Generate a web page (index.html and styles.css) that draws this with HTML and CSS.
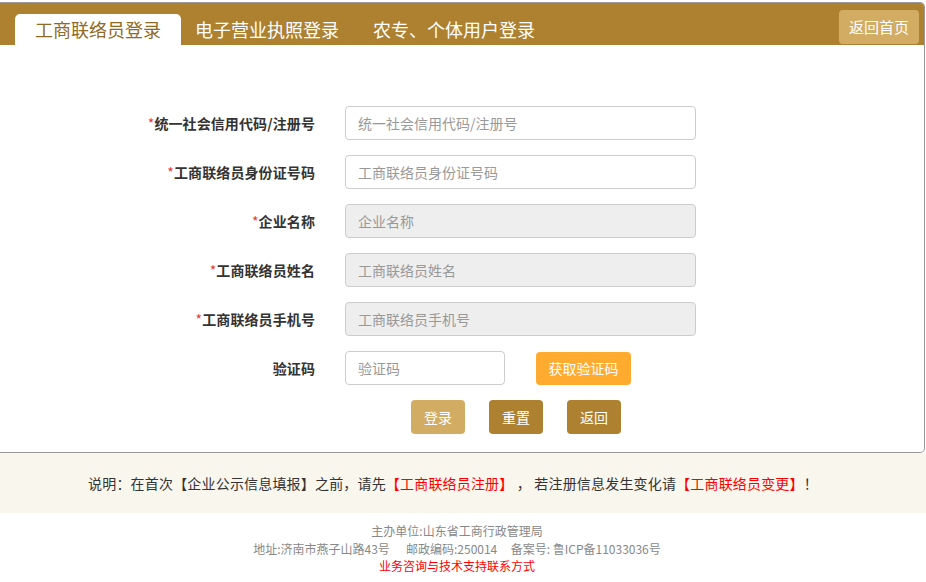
FILE: index.html
```html
<!DOCTYPE html>
<html lang="zh-CN">
<head>
  <meta charset="UTF-8" />
  <meta name="viewport" content="width=device-width, initial-scale=1" />
  <title>工商联络员登录</title>
  <link rel="stylesheet" href="styles.css">
</head>
<body>

  <div class="panel">
    <div class="panel-head">
      <div class="tabs">
        <a href="#" class="tab active">工商联络员登录</a>
        <a href="#" class="tab">电子营业执照登录</a>
        <a href="#" class="tab tab-last">农专、个体用户登录</a>
      </div>
      <a href="#" class="home-btn">返回首页</a>
    </div>

    <form class="login-form">
      <label class="form-label"><span class="req">*</span>统一社会信用代码/注册号</label>
      <input class="form-input" type="text" placeholder="统一社会信用代码/注册号">

      <label class="form-label"><span class="req">*</span>工商联络员身份证号码</label>
      <input class="form-input" type="text" placeholder="工商联络员身份证号码">

      <label class="form-label"><span class="req">*</span>企业名称</label>
      <input class="form-input" type="text" placeholder="企业名称" disabled>

      <label class="form-label"><span class="req">*</span>工商联络员姓名</label>
      <input class="form-input" type="text" placeholder="工商联络员姓名" disabled>

      <label class="form-label"><span class="req">*</span>工商联络员手机号</label>
      <input class="form-input" type="text" placeholder="工商联络员手机号" disabled>

      <label class="form-label">验证码</label>
      <div class="code-row">
        <input class="form-input code-input" type="text" placeholder="验证码">
        <button type="button" class="btn btn-orange">获取验证码</button>
      </div>

      <div class="actions">
        <button type="button" class="btn btn-light">登录</button>
        <button type="reset" class="btn btn-gold">重置</button>
        <button type="button" class="btn btn-gold">返回</button>
      </div>
    </form>
  </div>

  <div class="notice">
    说明：在首次【企业公示信息填报】之前，请先<a href="#" class="red">【工商联络员注册】</a> ，
    若注册信息发生变化请<a href="#" class="red">【工商联络员变更】</a>！
  </div>

  <div class="footer">
    <p>主办单位:山东省工商行政管理局</p>
    <p>地址:济南市燕子山路43号&nbsp;&nbsp;&nbsp;&nbsp;&nbsp;&nbsp;邮政编码:250014&nbsp;&nbsp;&nbsp;&nbsp;&nbsp;备案号: 鲁ICP备11033036号</p>
    <p><a href="#" class="red">业务咨询与技术支持联系方式</a></p>
  </div>

</body>
</html>
```

FILE: styles.css
```css
body {
  margin: 0;
  padding-top: 2px;
  background: #fff;
  color: #333;
  font-family: "Microsoft YaHei", "Noto Sans CJK SC", "Liberation Sans", sans-serif;
  font-size: 14px;
}

a {
  text-decoration: none;
}

.panel {
  width: 924px;
  border: 1px solid #999;
  border-left: none;
  border-radius: 0 5px 5px 0;
  overflow: hidden;
}

.panel-head {
  display: flex;
  justify-content: space-between;
  align-items: flex-end;
  height: 42px;
  background: #ad8130;
  padding-left: 15px;
}

.tabs {
  display: flex;
  align-items: flex-end;
}

.tab {
  height: 31px;
  line-height: 31px;
  padding: 0 14px;
  font-size: 18px;
  color: #fff;
}

.tab.active {
  padding: 0 20px;
  background: #fff;
  color: #8f6a26;
  border-radius: 5px 5px 0 0;
}

.tab-last {
  margin-left: 6px;
}

.home-btn {
  align-self: center;
  margin: 6px 5px 0 0;
  width: 80px;
  height: 34px;
  line-height: 34px;
  text-align: center;
  background: #d3ac63;
  color: #fff;
  font-size: 15px;
  border-radius: 4px;
}

.login-form {
  display: grid;
  grid-template-columns: 315px 351px;
  column-gap: 30px;
  row-gap: 15px;
  padding: 61px 0 18px;
  align-items: center;
}

.form-label {
  text-align: right;
  font-weight: bold;
  color: #333;
  letter-spacing: 0.1px;
}

.req {
  color: #e4393c;
  font-weight: normal;
}

.form-input {
  box-sizing: border-box;
  height: 34px;
  width: 100%;
  border: 1px solid #ccc;
  border-radius: 4px;
  padding: 0 12px;
  font-family: inherit;
  font-size: 14px;
  color: #555;
  background: #fff;
}

.form-input::placeholder {
  color: #999;
}

.form-input:disabled {
  background: #eee;
}

.code-row {
  display: flex;
  align-items: center;
  gap: 31px;
}

.code-input {
  width: 160px;
}

.btn {
  height: 34px;
  padding: 0 13px;
  border: none;
  border-radius: 4px;
  color: #fff;
  font-family: inherit;
  font-size: 14px;
  cursor: pointer;
}

.btn-orange {
  width: 95px;
  height: 33px;
  padding: 0;
  background: #ffab30;
}

.btn-light {
  background: #d3ac63;
}

.btn-gold {
  background: #ad8130;
}

.actions {
  grid-column: 2;
  display: flex;
  gap: 24px;
  padding-left: 66px;
}

.notice {
  height: 60px;
  line-height: 60px;
  background: #f9f6ee;
  text-align: center;
  padding-right: 20px;
  font-size: 14px;
  color: #333;
  letter-spacing: 0.18px;
}

.red {
  color: #f00;
}

.footer {
  padding: 9px 12px 0 0;
  text-align: center;
  font-size: 12px;
  color: #888;
}

.footer p {
  margin: 0;
  line-height: 17.5px;
}
```
